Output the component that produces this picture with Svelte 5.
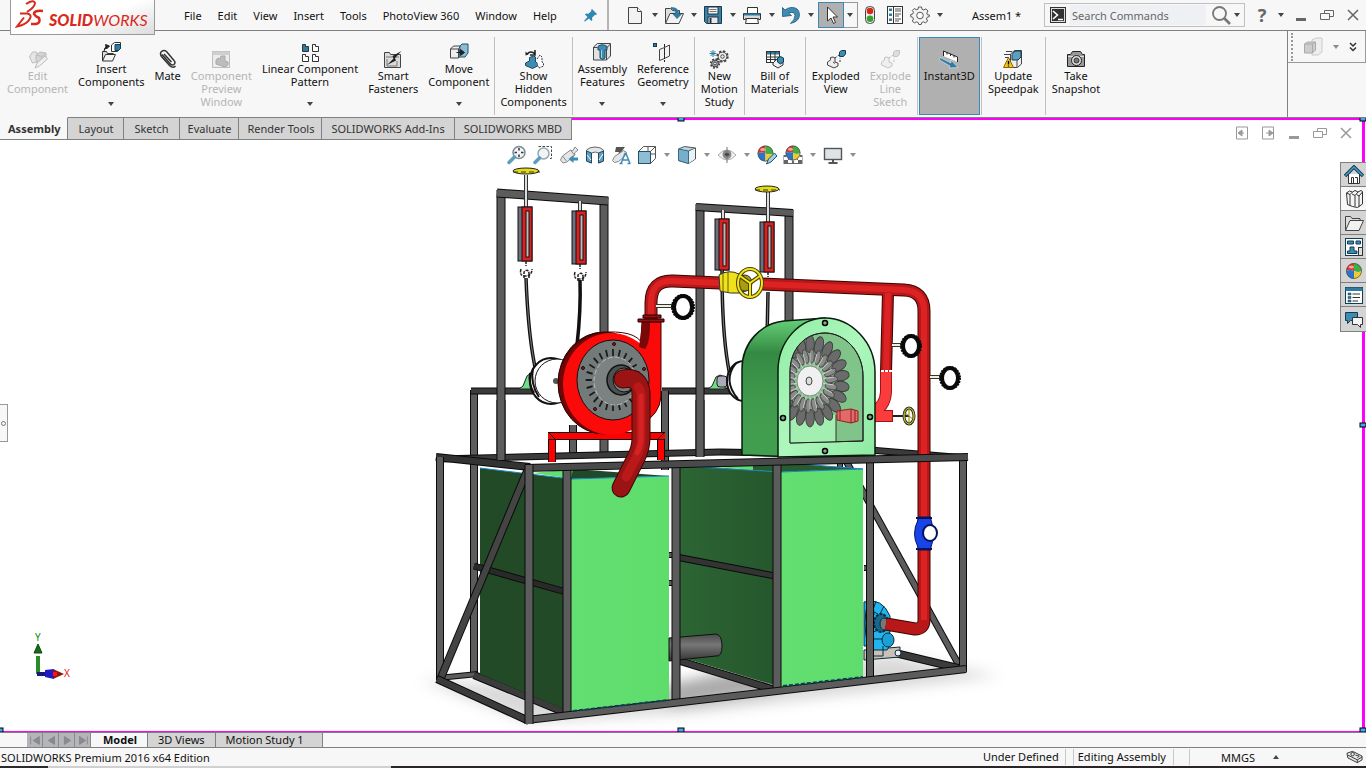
<script lang="ts">
	type Tool = {
		label: string;
		icon: string;
		menu?: boolean;
		disabled?: boolean;
		pressed?: boolean;
	};

	type Beam = [number, number, number, number, number, string?];

	const menus = ['File', 'Edit', 'View', 'Insert', 'Tools', 'PhotoView 360', 'Window', 'Help'];

	const quick = [
		{ label: 'New', icon: 'new', menu: true },
		{ label: 'Open', icon: 'open', menu: true },
		{ label: 'Save', icon: 'save', menu: true },
		{ label: 'Print', icon: 'print', menu: true },
		{ label: 'Undo', icon: 'undo', menu: true },
		{ label: 'Select', icon: 'cursor', menu: true, pressed: true },
		{ label: 'Rebuild', icon: 'traffic' },
		{ label: 'File Properties', icon: 'props' },
		{ label: 'Options', icon: 'gear', menu: true }
	];

	const ribbon: Tool[][] = [
		[
			{ label: 'Edit\nComponent', icon: 'edit', disabled: true },
			{ label: 'Insert\nComponents', icon: 'insert', menu: true },
			{ label: 'Mate', icon: 'mate' },
			{ label: 'Component\nPreview\nWindow', icon: 'preview', disabled: true },
			{ label: 'Linear Component\nPattern', icon: 'pattern', menu: true },
			{ label: 'Smart\nFasteners', icon: 'fasteners' },
			{ label: 'Move\nComponent', icon: 'move', menu: true }
		],
		[{ label: 'Show\nHidden\nComponents', icon: 'hidden' }],
		[
			{ label: 'Assembly\nFeatures', icon: 'features', menu: true },
			{ label: 'Reference\nGeometry', icon: 'reference', menu: true }
		],
		[{ label: 'New\nMotion\nStudy', icon: 'motion' }],
		[{ label: 'Bill of\nMaterials', icon: 'bom' }],
		[
			{ label: 'Exploded\nView', icon: 'explode' },
			{ label: 'Explode\nLine\nSketch', icon: 'explodeLine', disabled: true }
		],
		[{ label: 'Instant3D', icon: 'instant', pressed: true }],
		[{ label: 'Update\nSpeedpak', icon: 'speedpak' }],
		[{ label: 'Take\nSnapshot', icon: 'camera' }]
	];

	const tabs = ['Assembly', 'Layout', 'Sketch', 'Evaluate', 'Render Tools', 'SOLIDWORKS Add-Ins', 'SOLIDWORKS MBD'];
	const studyTabs = ['Model', '3D Views', 'Motion Study 1'];
	let activeTab = $state('Assembly');
	let activeStudy = $state('Model');
	let query = $state('');

	const headsUp = [
		{ label: 'Zoom to Fit', icon: 'zoomFit' },
		{ label: 'Zoom to Area', icon: 'zoomArea' },
		{ label: 'Previous View', icon: 'prevView' },
		{ label: 'Section View', icon: 'section' },
		{ label: 'Dynamic Annotation Views', icon: 'annot' },
		{ label: 'View Orientation', icon: 'orient', menu: true },
		{ label: 'Display Style', icon: 'style', menu: true },
		{ label: 'Hide/Show Items', icon: 'eye', menu: true },
		{ label: 'Edit Appearance', icon: 'appearance' },
		{ label: 'Apply Scene', icon: 'scene', menu: true },
		{ label: 'View Settings', icon: 'monitor', menu: true }
	];

	const pane = [
		{ label: 'Resources', icon: 'home' },
		{ label: 'Design Library', icon: 'books' },
		{ label: 'File Explorer', icon: 'folder' },
		{ label: 'View Palette', icon: 'palette' },
		{ label: 'Appearances', icon: 'ball' },
		{ label: 'Custom Properties', icon: 'custom' },
		{ label: 'Forum', icon: 'chat' }
	];

	const playback = ['M3 4v9M13 4l-7 4.5 7 4.5z', 'M12 4l-7 4.5 7 4.5z', 'M5 4l7 4.5-7 4.5z', 'M13 4v9M4 4l7 4.5-7 4.5z'];

	const ballArt = (cx: number, cy: number, r: number) =>
		`<circle cx="${cx}" cy="${cy}" r="${r}" fill="#fff"/>` +
		`<path d="M${cx} ${cy}V${cy - r}A${r} ${r} 0 0 0 ${cx - r} ${cy}Q${cx - r / 2} ${cy - 2} ${cx} ${cy}" fill="#d8392b"/>` +
		`<path d="M${cx} ${cy}V${cy - r}A${r} ${r} 0 0 1 ${cx + r} ${cy}Q${cx + r / 2} ${cy + 2} ${cx} ${cy}" fill="#3fae49"/>` +
		`<path d="M${cx} ${cy}Q${cx - r / 2} ${cy - 2} ${cx - r} ${cy}A${r} ${r} 0 0 0 ${cx} ${cy + r}z" fill="#2c74c9"/>` +
		`<path d="M${cx} ${cy}Q${cx + r / 2} ${cy + 2} ${cx + r} ${cy}A${r} ${r} 0 0 1 ${cx} ${cy + r}z" fill="#f1c933"/>` +
		`<circle cx="${cx}" cy="${cy}" r="${r - 0.5}" fill="none" stroke="#555" stroke-width=".8"/>` +
		`<ellipse cx="${cx - r / 3}" cy="${cy - r / 2}" rx="${r / 3}" ry="${r / 5}" fill="#fff" opacity=".55"/>`;

	const gearArt = (cx: number, cy: number, r: number, fill: string) =>
		`<circle cx="${cx}" cy="${cy}" r="${r}" fill="none" stroke="#444" stroke-width="2.4" stroke-dasharray="${r * 0.42} ${r * 0.365}"/>` +
		`<circle cx="${cx}" cy="${cy}" r="${r - 0.6}" fill="${fill}" stroke="#444"/>` +
		`<circle cx="${cx}" cy="${cy}" r="${r * 0.35}" fill="#f7f7f7" stroke="#444"/>`;

	// 20 x 20 artwork, keyed by command
	const icons: Record<string, string> = {
		new: '<path d="M3.500 2.500h9l4 4v12h-13z" fill="#f2f2f2" stroke="#444"/><path d="M12.500 2.500v4h4" fill="#fff" stroke="#444"/>',
		open: '<path d="M1.500 18V3.500h5l2 2h7V8" fill="#ddd" stroke="#444"/><path d="M1.500 18.500L6 8.500h13.500l-4.500 10z" fill="#f2f2f2" stroke="#444"/><path d="M7 2q8 0 8 7h3l-5 5-4.500-5h3q0-3.500-4.500-5z" fill="#2f7ca3"/>',
		save: '<path d="M1.500 1.500h17v17h-15l-2-2z" fill="#3a81a5" stroke="#123c52"/><rect x="5" y="2" width="10" height="7" fill="#f4f4f4" stroke="#234"/><path d="M6.500 4.500h7M6.500 6.500h7" stroke="#777"/><rect x="5" y="12" width="10" height="6.500" fill="#e8e8e8" stroke="#234"/><path d="M7.500 13v5" stroke="#234" stroke-width="2"/>',
		print: '<path d="M5.500 8V2.500h10V8" fill="#fff" stroke="#333"/><path d="M1.500 8.500h17v6h-17z" fill="#d9d9d9" stroke="#333"/><path d="M2 8.500h16v2H2zM3 13h14v2H3z" fill="#2f7ca3"/><path d="M4.500 13.500h11l1 5h-13z" fill="#fff" stroke="#333"/>',
		undo: '<path d="M1.500 2.500v9l9-1-3-2.500q6-2 6.500 2.500 0 4-4.500 8 9-2 9-9Q18 2 10 2.500q-4 .5-6 2.500z" fill="#3e8db5" stroke="#1f5571" stroke-width=".8"/>',
		cursor: '<path d="M6.500 2v14l3.500-3 2.500 5.500 2-1-2.500-5.500h4.500z" fill="#fff" stroke="#333"/>',
		traffic: '<rect x="5.500" y="1.500" width="9" height="17" rx="4" fill="#eee" stroke="#444"/><circle cx="10" cy="6" r="3.300" fill="#d62718"/><circle cx="10" cy="13.800" r="3.300" fill="#36a12e"/>',
		props: '<rect x="2.500" y="1.500" width="15" height="17" fill="#fff" stroke="#333"/><path d="M8.500 2v16" stroke="#333"/><path d="M4 3.500h3v2.500H4zM4 8.500h3V11H4zM4 13.500h3V16H4z" fill="#2f7ca3"/><path d="M10 4h6M10 6h6M10 9h6M10 11h4M10 14h6M10 16h4" stroke="#555"/>',
		gear: '<path d="M8.500 2h3l.6 2.300 1.700.7L15.900 3.800 18 6l-1.200 2 .6 1.700 2 .3v1.500l-2.200.8-.7 1.600L17.500 16l-2 2-2-1.200-1.700.7-.6 2H8.800l-.7-2-1.700-.7L4.300 18l-2-2 1.200-2-.8-1.700-2-.6V9.500l2-.5.8-1.700L2.300 5.500l2-2 2 1.200L8 4.200z" fill="#f3f3f3" stroke="#555"/><circle cx="10" cy="10.500" r="3.300" fill="#fff" stroke="#555"/>',
		edit: '<g stroke="#bdbdbd" fill="#e6e6e6"><path d="M1.500 8l3-5h4l1 3v7l-5 1z"/><path d="M8 6l4-3 6 1v7l-4 3-6-2z" fill="#d4d4d4"/><path d="M8 6l6 1.500L18 4M14 7.500V14" fill="none"/><path d="M7 19l2-5 8-7 2.500 3-8 7z" fill="#efefef"/></g>',
		insert: '<path d="M1.500 19V9.500h4l1 2h6" fill="#ddd" stroke="#333"/><path d="M1.500 19l3-6.500h10l-3 6.500z" fill="#f3f3f3" stroke="#333"/><path d="M3 9q0-4 4-5M4.500 2.500L8.500 4 5.500 7z" stroke="#222" fill="#222"/><path d="M10.500 3l3-2.500h6v6l-3 3h-6z" fill="#fff" stroke="#333"/><path d="M14 2.500h5.500v4l-2 2H14z" fill="#2f7ca3" stroke="#123c52"/>',
		mate: '<path d="M4 5.500l8 9q2 2.500 4 1 2-2 0-4L8.500 2.500Q6 .5 3.500 2.500q-2 2 0 5l8.500 9.500q3 2.500 5.500 0M6 5l7.500 8" fill="none" stroke="#333" stroke-width="1.500"/>',
		preview: '<rect x="1.500" y="2.500" width="17" height="16" fill="#ececec" stroke="#bdbdbd"/><path d="M1.500 2.500h17V6h-17z" fill="#cfcfcf"/><path d="M5 11l2-2 2 1 1-3h4v5l3 1v3l-3 2-9-3z" fill="#bdbdbd" stroke="#aaa"/>',
		pattern: '<g fill="#fff" stroke="#333"><path d="M2.500 2.500h3v2h3v5h-6z" fill="#2f7ca3"/><path d="M12.500 2.500h3v2h3v5h-6zM2.500 12.500h3v2h3v5h-6zM12.500 12.500h3v2h3v5h-6z"/></g>',
		fasteners: '<path d="M1.500 18.500v-15h5l1 2h10v13z" fill="#dcdcdc" stroke="#444"/><path d="M3 8h13M4 10v7h10v-5" fill="none" stroke="#777"/><path d="M18.500 2l-9 5 1 2.500L4 16l9-4.500-1-2.500z" fill="#222"/>',
		move: '<path d="M1.500 7l3-3h7v9l-2 3h-8z" fill="#eee" stroke="#444"/><path d="M1.500 7h8v9M9.500 7l2-3" fill="none" stroke="#444"/><path d="M11 4l2-2h6v9l-3 4h-6z" fill="#8dbdd5" stroke="#22536b"/><path d="M7.500 10.500h5M11.500 7.500l4 3-4 3z" fill="#222" stroke="#222"/>',
		hidden: '<path d="M3 5q4-4 8 0M11 1v5H6" fill="none" stroke="#222" stroke-width="1.600"/><path d="M1.500 6.500v-4l3 3z" fill="#222"/><path d="M1.500 14l4-2V8.500l4-1.500 2 1v5l2 1v3l-5 2.500-7-3z" fill="#3f8cb3" stroke="#1b4a61"/><path d="M13 10l3-4 2 2v5l1.500 1v3L15 19l-1-2" fill="#fff" stroke="#333" stroke-dasharray="2 1"/>',
		features: '<path d="M1.500 5l4-3.500h13V14l-4 4h-13z" fill="#e2e2e2" stroke="#444"/><path d="M1.500 5.500h4M14.500 18V6l4-4" fill="none" stroke="#444"/><path d="M6 4.500Q10 1 15 4.500V8h-2v8l-2.500 1.500L8 16V8H6z" fill="#3f8cb3" stroke="#1b4a61"/><path d="M9.500 8v8" stroke="#9fd0e6"/>',
		reference: '<rect x=".5" y="1.500" width="3" height="3" fill="#2f7ca3" stroke="#123c52"/><path d="M6.500 7.500l5-2v11l-5 2zM11.500 5.500L16.500 3v11l-5 2.500" fill="#f3f3f3" stroke="#444"/><path d="M11.500 2v18" stroke="#222" stroke-dasharray="3 1"/>',
		motion: '<path d="M4 1v7M.5 4.500h7M1.500 2l5 5M6.500 2l-5 5" stroke="#2f7ca3"/>' + gearArt(13.5, 7.5, 5, '#eee') + gearArt(6, 14.5, 4, '#aaa'),
		bom: '<rect x="1.500" y="2.500" width="13" height="11" fill="#fff" stroke="#333"/><path d="M2 3h12v2.500H2z" fill="#2f7ca3"/><path d="M1.500 8h13M1.500 10.500h13M5.500 3v10M10 3v10" stroke="#333"/><path d="M8 14l4-4 6 2v4l-5 3-5-3z" fill="#eee" stroke="#333"/><path d="M12.500 9l3-1.500 3 1.500v4l-3 2-3-2z" fill="#3f8cb3" stroke="#123c52"/>',
		explode: '<path d="M1.500 13l3-2V8.500L7 8l2 1v4l3 1v3l-4 2-6.500-3z" fill="#eee" stroke="#444"/><path d="M7 13l2 1.500" stroke="#444"/><path d="M9 9l4-3M14 13V9" stroke="#333" stroke-dasharray="2 1.500"/><path d="M13.500 3l2-1.500h4V5l-2 2.500h-4z" fill="#3f8cb3" stroke="#123c52"/>',
		explodeLine: '<path d="M1.500 13l3-2V8.500L7 8l2 1v4l3 1v3l-4 2-6.500-3z" fill="#eee" stroke="#c4c4c4"/><path d="M9 9l4-3M14 13V9" stroke="#bbb" stroke-dasharray="2 1.500"/><path d="M13.500 3l2-1.500h4V5l-2 2.500h-4z" fill="#ddd" stroke="#c4c4c4"/>',
		instant: '<path d="M4.500 2l14 6v5l-14-6z" fill="#fff"/><path d="M4.500 7V2l14 6v5M8 3.500v2M11.500 5v2M15 6.500v2" fill="none" stroke="#222"/><path d="M1 8.500l11 5.500v-3l7 7.500-9 .5 1-2L.500 11z" fill="#2f7ca3" stroke="#e6eef2" stroke-width=".6"/>',
		speedpak: '<path d="M3 2.500h6M1 5.500h6M2 8.500h4" stroke="#444"/><path d="M7.500 5l4-3.500h7V15l-4 3.500h-7z" fill="#eee" stroke="#444"/><path d="M9 5.500L12 2h6v6l-3 3H9z" fill="#5b9fc1" stroke="#123c52"/><path d="M14 11v7" stroke="#444"/><path d="M5.500 8.500l5 10H.500z" fill="#f6c61e" stroke="#8a6500"/><path d="M5.500 12v3.500M5.500 16.500v1" stroke="#000" stroke-width="1.400"/>',
		camera: '<path d="M1.500 5.500h3l2-3h8l2 3h2v12h-17z" fill="#999" stroke="#222"/><path d="M2 7.500h16" stroke="#ddd"/><circle cx="10.500" cy="11.500" r="5" fill="#ddd" stroke="#222"/><circle cx="10.500" cy="11.500" r="2.500" fill="#777" stroke="#333"/>',
		zoomFit: '<circle cx="12" cy="7.500" r="6" fill="#eef4f7" stroke="#7b8b93" stroke-width="1.500"/><path d="M12 3v2.500M12 9.500V12M7.500 7.500H10M14 7.500h2.500" stroke="#333" stroke-width="1.500"/><path d="M7.500 12L2 17.500" stroke="#5e9dbd" stroke-width="3.500" stroke-linecap="round"/>',
		zoomArea: '<path d="M5.500 1.500h13v12h-3" fill="none" stroke="#444" stroke-dasharray="2.500 1.500"/><circle cx="10.500" cy="8.500" r="5.500" fill="#eef4f7" stroke="#9aa8af" stroke-width="1.500"/><path d="M6.500 13L2 17.500" stroke="#5e9dbd" stroke-width="3.500" stroke-linecap="round"/>',
		prevView: '<path d="M1.500 15l2-4 8-6 2 1 2.500-4 3 3-3.500 3 .5 2-8 7-4 1z" fill="#e4e6e7" stroke="#888"/><path d="M3.500 11l4 5M11.500 5l4 5" stroke="#888"/><path d="M9.500 14l5-4v2.500H19v3h-4.500V18z" fill="#3f8cb3"/>',
		section: '<path d="M1.500 5q3-3 8.500-3t8.500 3v11l-5 2V8q-3-2-7 0v10l-5-2z" fill="#e2e6e8" stroke="#666"/><path d="M1.500 6l5 2v10l-5-2zM13.500 8l5-2v10l-5 2z" fill="#5e9dbd" stroke="#1b4a61"/><path d="M2 10l4 5M14 15l4-6" stroke="#fff"/>',
		annot: '<path d="M5 2h9l-3 4h4l-9 6 2-5H4z" fill="#555"/><path d="M1.500 15.500l2-4 9-6 3 2-2 4-6 5-4 1z" fill="#e4e6e7" stroke="#888"/><path d="M10 18.500l4-10h1l4 10M11.500 15h6M8.500 18.500h3M16.500 18.500h3" fill="none" stroke="#3f8cb3" stroke-width="1.500"/>',
		orient: '<path d="M1.500 6.500l5-5h12v12l-5 5h-12z" fill="#fff" stroke="#555"/><rect x="1.500" y="6.500" width="12" height="12" fill="#8fbdd4" stroke="#22536b"/><path d="M13.500 6.500l5-5M18.500 9H14M11 1.500v5" stroke="#555"/>',
		style: '<path d="M1.500 4l6-2.500 11 1.500v11l-7 4.500-10-3z" fill="#b8d5e3" stroke="#555"/><path d="M1.500 4l10 2v12.500l-10-3z" fill="#78aecb" stroke="#386b84"/><path d="M11.500 6l7-3" stroke="#555"/><path d="M12 6.500l6-3V14l-6 4z" fill="#e9f2f6"/>',
		eye: '<path d="M1 10q9-10 18 0-9 10-18 0z" fill="#f4f4f4" stroke="#aaa"/><circle cx="10" cy="9.500" r="4.500" fill="#888"/><circle cx="10" cy="9.500" r="1.800" fill="#222"/><path d="M10 2v16" stroke="#777"/>',
		appearance: ballArt(8.5, 8.5, 8) + '<path d="M9.500 19l2-5 6-6 2.500 3-6 6z" fill="#9fd0e6" stroke="#22536b"/>',
		scene: '<rect x=".5" y="10" width="19" height="9" fill="#666"/><path d="M1 12h4v3H1zM5 15h4v3H5zM15 12h4v3h-4zM11 15h4v3h-4z" fill="#fff"/>' + ballArt(10, 8, 7.5),
		monitor: '<rect x="1.500" y="3.500" width="17" height="11" fill="#dfe3e5" stroke="#555" stroke-width="1.400"/><path d="M10 15v3M5.500 18h9" stroke="#555" stroke-width="2"/>',
		home: '<path d="M4.500 9v9.500h11V9" fill="#fff" stroke="#333"/><path d="M7.500 18.500v-6h2v6M11 12.500h2.500v6" fill="none" stroke="#333"/><path d="M1 11l9-9 9 9" fill="none" stroke="#123c52" stroke-width="3.500"/><path d="M1.500 10.500L10 2l8.500 8.500" fill="none" stroke="#4c9cc4" stroke-width="1.500"/>',
		books: '<path d="M2.500 4l3-2 3 1 2.500-1.500L14 3l3-1.500 1.500 1V15l-5 3.500-5-1-5-2z" fill="#f5f5f5" stroke="#333"/><path d="M2.500 4L6 5.500v11M6 5.500L8.500 3M8 5l3 1.500v11M11 6.500L14 3M12.500 5.500L15 7v11M15 7l3.500-4" fill="none" stroke="#333"/>',
		folder: '<path d="M1.500 17.500v-14h5l1.500 2h8V8" fill="#ddd" stroke="#444"/><path d="M1.500 17.500L6 7.500h13.500l-4.500 10z" fill="#f2f2f2" stroke="#444"/>',
		palette: '<rect x="1.500" y="1.500" width="17" height="17" fill="#fff" stroke="#123c52"/><path d="M3.500 4h6v3h-6zM12 4h4.500v3H12zM6 10h4v4h3v2.500H3.500V14H6z" fill="#3f8cb3" stroke="#123c52"/><rect x="14.500" y="10.500" width="4" height="8" fill="#ddd" stroke="#333"/>',
		ball: ballArt(10, 10, 8),
		custom: '<rect x="1.500" y="2.500" width="17" height="16" fill="#fff" stroke="#123c52"/><path d="M1.500 2.500h17V6h-17z" fill="#2f7ca3"/><path d="M4 8h3v2H4zM4 11.500h3v2H4zM4 15h3v2H4z" fill="#2f7ca3" stroke="#123c52" stroke-width=".5"/><path d="M8.500 9H16M8.500 12.500H16M8.500 16H14" stroke="#333"/>',
		chat: '<path d="M1.500 3.500h12v8h-7l-3 3v-3h-2z" fill="#3f8cb3" stroke="#123c52"/><path d="M8.500 8.500h10v7h-2v3l-3-3h-5z" fill="#f4f4f4" stroke="#333"/>'
	};

	const steel = '#5c5c5c';

	const backBeams: Beam[] = [
		[474, 390, 474, 675, 8],
		[471, 391, 558, 391, 7, '#3b3b3b'],
		[662, 391, 745, 391, 7, '#3b3b3b'],
		[665, 391, 665, 470, 8],
		[573, 425, 573, 457, 8],
		[604, 197, 604, 458, 9],
		[501, 190, 501, 460, 9],
		[497, 193, 608, 201, 9],
		[700, 204, 700, 457, 9],
		[789, 210, 789, 340, 9],
		[696, 207, 793, 213, 8],
		[846, 461, 960, 667, 7],
		[840, 457, 840, 468, 6],
		[438, 678, 478, 674, 6],
		[669, 555, 673, 555, 6],
		[669, 583, 673, 583, 6],
		[864, 568, 869, 568, 6],
		[895, 653, 962, 669, 8, '#3b3b3b'],
		[474, 675, 566, 713, 8, '#3b3b3b'],
		[680, 661, 775, 690, 8, '#3b3b3b']
	];

	const deckBeams: Beam[] = [
		[438, 459, 720, 452, 7, '#3b3b3b'],
		[720, 452, 875, 455, 7, '#2e2e2e'],
		[870, 450, 966, 458, 7, '#3b3b3b'],
		[436, 457, 530, 467, 8, '#333']
	];

	// posts standing on the deck, over its rear edge
	const deckPosts: Beam[] = [
		[501, 400, 501, 460, 9],
		[700, 400, 700, 456, 9]
	];

	const frontBeams: Beam[] = [
		[474, 566, 566, 592, 7, '#292929'],
		[676, 557, 775, 576, 7, '#333'],
		[440, 457, 440, 680, 8],
		[567, 469, 567, 714, 9],
		[676, 465, 676, 702, 9],
		[777, 463, 777, 690, 9],
		[870, 460, 870, 679, 8],
		[963, 456, 963, 672, 8],
		[527, 471, 440, 680, 8, '#444'],
		[437, 679, 529, 721, 8, '#3b3b3b'],
		[527, 720, 966, 669, 8],
		[525, 468, 968, 457, 8, '#4a4a4a'],
		[529, 465, 529, 724, 9]
	];

	const scales = [
		{ x: 518, y: 207, h: 54, top: 175 },
		{ x: 572, y: 211, h: 53, top: 201 },
		{ x: 715, y: 219, h: 51, top: 210 },
		{ x: 760, y: 222, h: 50, top: 192 }
	];

	const gauges = [
		{ x: 683, y: 307, r: 10, from: 656 },
		{ x: 911, y: 346, r: 9, from: 892 },
		{ x: 950, y: 378, r: 9, from: 930 }
	];

	const fins = Array.from({ length: 24 }, (_, i) => i * 15);
	const blades = Array.from({ length: 22 }, (_, i) => (i * 360) / 22);

	const handles = [
		[681, 119],
		[1363, 119],
		[1363, 425],
		[1363, 730],
		[681, 730],
		[0, 730]
	];
</script>

{#snippet icon(name: string)}
	<svg class="icon" viewBox="0 0 20 20" fill="none" aria-hidden="true">{@html icons[name]}</svg>
{/snippet}

{#snippet caret()}
	<svg class="caret" viewBox="0 0 6 4" aria-hidden="true"><path d="M0 0h6L3 4z" fill="currentColor" /></svg>
{/snippet}

{#snippet winIcon(kind: string)}
	<svg class="win-icon" viewBox="0 0 14 14" fill="none" stroke="currentColor" aria-hidden="true">
		{#if kind === 'min'}
			<path d="M2 11.500h10" stroke-width="3" />
		{:else if kind === 'restore'}
			<path d="M4.500 5V2.500h9v6H10M.5 5.500h9v6h-9z" />
		{:else if kind === 'close'}
			<path d="M2 2l10 10M12 2L2 12" stroke-width="1.500" />
		{:else if kind === 'left'}
			<path d="M1.500 1h11v12h-11z" /><path d="M7 4L3 7l4 3zM7 7h2" fill="currentColor" />
		{:else}
			<path d="M1.500 1h11v12h-11z" /><path d="M8 4l4 3-4 3zM5 7h3" fill="currentColor" />
		{/if}
	</svg>
{/snippet}

{#snippet beams(list: Beam[])}
	{#each list as [x1, y1, x2, y2, w, tone]}
		<line {x1} {y1} {x2} {y2} stroke="#0a0a0a" stroke-width={w} />
		<line {x1} {y1} {x2} {y2} stroke={tone ?? steel} stroke-width={w - 2} />
	{/each}
{/snippet}

<div class="app">
	<header class="titlebar">
		<div class="logo">
			<svg viewBox="0 0 30 28" aria-hidden="true">
				<path d="M11 4q8-5 9-1 0 4-8 9" fill="none" stroke="#da291c" stroke-width="2" />
				<path d="M5 13.500h7q5 1 3 5-3 6-13 8l7-9" fill="none" stroke="#da291c" stroke-width="2" />
				<path d="M28 11q-9-1-9 3 1 2 5 4 2 5-3 6h-5" fill="none" stroke="#da291c" stroke-width="2.600" />
			</svg>
			<span><b>SOLID</b>WORKS</span>
		</div>
		<nav class="menus" aria-label="Main menu">
			{#each menus as menu}
				<button>{menu}</button>
			{/each}
			<button class="pin" aria-label="Pin menu">
				<svg viewBox="0 0 14 14" aria-hidden="true"><path d="M8 1l5 5-1 1-1-.3-3 3 .3 2.500-1 .8L5 10.500 1 13.500 0 13l3.500-4L1 6.500 2 5.500l2.500.3 3-3L7 2z" fill="#2f86b3" /></svg>
			</button>
		</nav>
		<div class="quick">
			{#each quick as q}
				<span class="split" class:pressed={q.pressed}>
					<button class="main" aria-label={q.label}>{@render icon(q.icon)}</button>
					{#if q.menu}<button class="more" aria-label="{q.label} menu">{@render caret()}</button>{/if}
				</span>
			{/each}
		</div>
		<span class="doc">Assem1 *</span>
		<div class="search">
			<svg class="prompt" viewBox="0 0 16 16" aria-hidden="true"><rect width="16" height="16" fill="#333" /><rect x="1.500" y="1.500" width="13" height="13" fill="none" stroke="#ddd" /><path d="M3 4l4.500 4L3 12M8 12.500h5" fill="none" stroke="#fff" stroke-width="1.600" /></svg>
			<input type="text" aria-label="Search Commands" placeholder="Search Commands" bind:value={query} />
			<button aria-label="Search">
				<svg viewBox="0 0 20 20" aria-hidden="true"><circle cx="8.500" cy="8.500" r="6.500" fill="none" stroke="#777" stroke-width="1.800" /><path d="M13 13l6 6" stroke="#777" stroke-width="2.600" /></svg>
			</button>
			<button class="small" aria-label="Search options">{@render caret()}</button>
		</div>
		<div class="window-buttons">
			<button class="help" aria-label="Help">?</button>
			<button class="help-more" aria-label="Help menu">{@render caret()}</button>
			<button aria-label="Minimize">{@render winIcon('min')}</button>
			<button aria-label="Restore">{@render winIcon('restore')}</button>
			<button aria-label="Close">{@render winIcon('close')}</button>
		</div>
	</header>

	<div class="ribbon-row">
		<div class="ribbon">
			{#each ribbon as group}
				<div class="group">
					{#each group as tool}
						<button class="tool" class:with-menu={tool.menu} class:pressed={tool.pressed} disabled={tool.disabled}>
							{@render icon(tool.icon)}
							<span>{tool.label}</span>
							{#if tool.menu}{@render caret()}{/if}
						</button>
					{/each}
				</div>
			{/each}
		</div>
		<div class="side">
			<div class="side-bar">
				<i></i>
				<button aria-label="View cube" disabled>
					<svg viewBox="0 0 20 20" aria-hidden="true"><path d="M9 3l4-2h6v14l-4 3H9z" fill="#eee" stroke="#ccc" /><path d="M1.500 7l3-2h8v8l-3 3h-8z" fill="#ccc" stroke="#aaa" /><path d="M1.500 7h8v9M9.500 7l3-2" stroke="#aaa" fill="none" /></svg>
				</button>
				<button class="dim" aria-label="View cube menu" disabled>{@render caret()}</button>
				<button aria-label="More commands">
					<svg class="chevrons" viewBox="0 0 8 10" aria-hidden="true"><path d="M1 1l3 3 3-3M1 5.500l3 3 3-3" fill="none" stroke="#333" stroke-width="1.500" /></svg>
				</button>
			</div>
		</div>
	</div>

	<main class="viewport">
		<svg class="scene" viewBox="0 118 1366 614" role="img" aria-label="Turbine test rig assembly">
			<defs>
				<linearGradient id="tank-front" x1="0" y1="0" x2="1" y2="0">
					<stop offset="0" stop-color="#62df70" />
					<stop offset="1" stop-color="#5edc6c" />
				</linearGradient>
				<linearGradient id="tank-side" x1="0" y1="0" x2="1" y2="0">
					<stop offset="0" stop-color="#2d6534" />
					<stop offset="1" stop-color="#25562c" />
				</linearGradient>
				<linearGradient id="case-side" x1="0" y1="0" x2="0" y2="1">
					<stop offset="0" stop-color="#67d37a" />
					<stop offset=".25" stop-color="#358a43" />
					<stop offset=".6" stop-color="#3f9a4d" />
					<stop offset="1" stop-color="#439f50" />
				</linearGradient>
				<linearGradient id="case-front" x1="0" y1="0" x2="1" y2="1">
					<stop offset="0" stop-color="#8feda4" />
					<stop offset=".5" stop-color="#adf7bd" />
					<stop offset="1" stop-color="#8eeaa2" />
				</linearGradient>
				<linearGradient id="drum" x1="0" y1="0" x2="0" y2="1">
					<stop offset="0" stop-color="#4a4a4a" />
					<stop offset=".4" stop-color="#777" />
					<stop offset="1" stop-color="#333" />
				</linearGradient>
				<clipPath id="window"><path d="M790 443V372C790 349 805 333 825 333S863 352 863 376V441Z" /></clipPath>
				<filter id="soft" x="-20%" y="-100%" width="140%" height="300%"><feGaussianBlur stdDeviation="7" /></filter>
			</defs>

			<path d="M420 680L530 722 700 712 1000 676 890 655 640 690Z" fill="#aaa" opacity=".45" filter="url(#soft)" />
			<path d="M669 685L775 660V690L669 706Z" fill="#777" opacity=".5" filter="url(#soft)" />
			{@render beams(backBeams)}

			<!-- load frames -->
			{#each scales as s}
				<path d="M{s.x + 8} {s.top}V{s.y}" stroke="#333" stroke-width="4" />
				<path d="M{s.x + 8} {s.top}V{s.y}" stroke="#ddd" stroke-width="2" />
				<rect x={s.x} y={s.y} width="14" height={s.h} fill="#6e7080" stroke="#111" />
				<rect x={s.x + 4} y={s.y} width="10" height={s.h} fill="#dc2020" stroke="#111" />
				<rect x={s.x + 8} y={s.y + 4} width="3" height={s.h - 8} fill="#bbb" stroke="#111" />
				<path d="M{s.x + 8} {s.y + s.h}v5m-5 3q-2 7 4 7q7 0 7-7m-8 9v-6q4-4 5 1v5" fill="none" stroke="#222" stroke-width="1.500" stroke-dasharray="3 1" />
			{/each}
			<g fill="#e6dc12" stroke="#222">
				<ellipse cx="526" cy="171" rx="13" ry="3" />
				<ellipse cx="767" cy="189" rx="12" ry="3" />
			</g>
			<path d="M513 172h27M755 190h25" stroke="#333" stroke-dasharray="5 3" />
			<g fill="none" stroke="#111" stroke-width="3.500">
				<path d="M526 278Q528 330 534 362T541 392" />
				<path d="M580 280Q581 310 577 345" />
				<path d="M722 270Q722 330 728 365T738 398" />
				<path d="M768 292L767 340" />
			</g>
			<path d="M526 278Q528 330 534 362T541 392M722 270Q722 330 728 365T738 398M768 292L767 340" fill="none" stroke="#999" stroke-width=".8" />

			<!-- brake wheels -->
			<path d="M519 389l4-3 4-10 4-3 4 2v14zM708 389l4-3 4-9 4-2 5 2v12z" fill="#6fdc8b" stroke="#222" />
			<ellipse cx="551" cy="381" rx="21" ry="23" fill="#fff" stroke="#111" stroke-width="2" />
			<ellipse cx="557" cy="381" rx="22" ry="22" fill="#fff" stroke="#111" />
			<path d="M530 373q-2 10 4 20M533 368q-3 16 6 29" fill="none" stroke="#111" stroke-width="2" />
			<circle cx="556" cy="381" r="3" fill="#555" />
			<rect x="717" y="376" width="10" height="11" rx="3" fill="#aab" stroke="#222" />
			<ellipse cx="744" cy="381" rx="17" ry="20" fill="#fff" stroke="#111" stroke-width="2" />
			<path d="M736 363q-14 17 2 36" fill="none" stroke="#111" stroke-width="2" />

			<!-- tanks -->
			<path d="M480 468L571 479V712L480 674Z" fill="#224a27" />
			<path d="M532 473L573 469V479Z" fill="#62df70" />
			<path d="M573 469L669 476 571 479Z" fill="#21482a" />
			<path d="M571 479L669 476V700L571 711Z" fill="url(#tank-front)" />
			<path d="M480 468L571 479 669 476" fill="none" stroke="#1785c4" />
			<path d="M680 465L781 472V687L680 657Z" fill="url(#tank-side)" />
			<path d="M703 466L753 464V470Z" fill="#62df70" />
			<path d="M753 464H800L863 469 781 472 753 470Z" fill="#285c30" />
			<path d="M781 472L863 469V678L781 687Z" fill="url(#tank-front)" />
			<path d="M680 466L781 472 863 469M800 464L863 469" fill="none" stroke="#1785c4" />
			<path d="M669 638L716 634Q722 635 722 646T716 656L669 661Z" fill="url(#drum)" stroke="#111" />

			<!-- feed pump -->
			<g stroke="#0a2c3a">
				<path d="M864 650l36-3v10l-36 3z" fill="#c9c0b8" />
				<path d="M864 602q18-5 26 14v16l-8 14h-18z" fill="#22b4ee" />
				<path d="M868 645l5-6h10l8 5-4 6h-17z" fill="#22b4ee" />
				<ellipse cx="888" cy="640" rx="6" ry="7" fill="#1aa0d6" />
				<path d="M868 602q-6 20 0 44M876 601q-4 8-2 14M884 606l-4 8M866 622h9M872 646v10h11v-10M866 634l10-3M870 610l8 4" fill="none" />
				<ellipse cx="881" cy="623" rx="7" ry="9" fill="#17698c" stroke-width="2" stroke-dasharray="3 1" />
				<ellipse cx="884" cy="624" rx="4" ry="6" fill="#777" />
				<circle cx="898" cy="653" r="3" fill="#eee" />
			</g>

			{@render beams(deckBeams)}
			{@render beams(deckPosts)}

			<!-- delivery pipes -->
			<g fill="none" stroke-linejoin="round">
				<g stroke="#3a0505">
					<path d="M651 320V303Q651 280 673 281L720 283M762 284L904 290Q924 291 924 311V620Q924 629 915 629L886 624" stroke-width="13" />
					<path d="M888 293L886 372" stroke-width="12" />
				</g>
				<g stroke="#b81818">
					<path d="M651 320V303Q651 280 673 281L720 283M762 284L904 290Q924 291 924 311V620Q924 629 915 629L886 624" stroke-width="11" />
					<path d="M888 289L886 372" stroke-width="10" />
				</g>
				<g stroke="#dc2222" stroke-width="6">
					<path d="M651 320V303Q651 280 673 281L720 283M762 284L904 290Q924 291 924 311V620" />
					<path d="M888 293L886 372" />
				</g>
				<path d="M886 371V392Q885 408 872 411M872 416H893" stroke="#a01414" stroke-width="12" />
				<path d="M886 372V392Q885 408 872 411M872 416H892" stroke="#fb3c3c" stroke-width="10" />
				<path d="M881 371h11" stroke="#fff" stroke-width="2" stroke-dasharray="3 1" />
			</g>

			<!-- check valve -->
			<path d="M918 517h13v3q5 14 0 27v3h-13v-3q-7-13 0-27z" fill="#1644e8" stroke="#06135c" />
			<path d="M916 518h16M916 549h16" stroke="#06135c" stroke-width="2" />
			<ellipse cx="930" cy="533" rx="7" ry="8" fill="#fff" stroke="#06135c" stroke-width="2" />

			<!-- gate valve -->
			<path d="M719 275q10-6 20-1l10 3v13l-10 3q-8 1-19-2z" fill="#efe21d" stroke="#333" />
			<path d="M723 273v19M728 272v21" stroke="#665e00" />
			<ellipse cx="745" cy="283" rx="7" ry="8" fill="#a89c12" stroke="#333" />
			<g fill="none" stroke="#4a4300">
				<ellipse cx="750" cy="283" rx="12" ry="14" stroke-width="4" />
				<path d="M750 283v14M750 283l-10-7M750 283l10-7" stroke-width="4" />
			</g>
			<g fill="none" stroke="#f2e51c" stroke-width="2">
				<ellipse cx="750" cy="283" rx="12" ry="14" />
				<path d="M750 283v14M750 283l-10-7M750 283l10-7" />
			</g>
			<path d="M893 416h16" stroke="#222" stroke-width="2" />
			<ellipse cx="909" cy="416" rx="5" ry="8" fill="none" stroke="#333" stroke-width="3" />
			<ellipse cx="909" cy="416" rx="5" ry="8" fill="none" stroke="#e6dc12" />
			<path d="M909 408v16M904 412l10 8" stroke="#8a8200" />

			{#each gauges as g}
				<path d="M{g.from} {g.y - 1}H{g.x - g.r}" stroke="#333" stroke-width="4" />
				<path d="M{g.from} {g.y - 1}H{g.x - g.r}" stroke="#f5efd8" stroke-width="2" />
				<ellipse cx={g.x} cy={g.y} rx={g.r - 1} ry={g.r + 1} fill="#fff" stroke="#0a0a0a" stroke-width="4" />
				<ellipse cx={g.x} cy={g.y} rx={g.r + 1} ry={g.r + 2} fill="none" stroke="#0a0a0a" stroke-width="2" stroke-dasharray="2 1" />
			{/each}

			{@render beams(frontBeams)}
			<path d="M573 711L669 700M783 686L863 677" stroke="#0b3d55" stroke-width="2" stroke-dasharray="4 2" />

			<!-- turbine casing -->
			<path d="M742 455V369C742 342 762 323 784 321L825 318 800 457Z" fill="url(#case-side)" stroke="#0a1c0d" stroke-width="1.500" />
			<path d="M778 457V371C778 342 799 318 825 318S875 342 875 372V455Z" fill="url(#case-front)" stroke="#0a1c0d" stroke-width="1.500" />
			<path d="M790 443V372C790 349 805 333 825 333S863 352 863 376V441Z" fill="#80c48a" stroke="#222" />
			<g clip-path="url(#window)">
				<path d="M790 415H836V443H790Z" fill="#a3efb2" />
				<path d="M836 415V443" stroke="#333" />
				{#each blades as angle}
					<g transform="translate(810 381) scale(.86 1) rotate({angle})">
						<ellipse cx="0" cy="-37" rx="5" ry="9" fill="#6b6b6b" stroke="#3b3b3b" />
						<ellipse cx="2" cy="-25" rx="3" ry="7" fill="#8a8a8a" stroke="#474747" />
						<path d="M0-15V-28" stroke="#ccc" />
					</g>
				{/each}
			</g>
			<ellipse cx="810" cy="381" rx="13" ry="15" fill="#f0f0f0" stroke="#888" />
			<ellipse cx="809" cy="381" rx="3" ry="4" fill="#ddd" stroke="#444" />
			<path d="M837 411L851 409 858 411V421L851 423 837 420Z" fill="#e26b69" stroke="#8d1f1f" />
			<path d="M840 411v9M851 409v14M855 410v12" stroke="#8d1f1f" />
			<path d="M790 443V372C790 349 805 333 825 333S863 352 863 376V441Z" fill="none" stroke="#222" />
			{#each [[825, 323], [783, 418], [870, 417], [825, 451]] as [cx, cy]}
				<circle {cx} {cy} r="2.500" fill="#8aa790" stroke="#000" stroke-width="1.500" />
			{/each}

			<!-- centrifugal pump -->
			{@render beams([
				[552, 436, 552, 462, 8, '#f00'],
				[661, 436, 661, 460, 8, '#f00'],
				[548, 436, 665, 436, 8, '#f00']
			])}
			<path d="M549 433l6 6M664 433l-6 6" stroke="#300" />
			<path d="M642 322H661V396Q660 415 640 425L632 352 641 343Z" fill="#f00d0d" stroke="#400" />
			<ellipse cx="604" cy="383" rx="46" ry="51" fill="#710606" stroke="#200" />
			<ellipse cx="611" cy="384" rx="48" ry="51" fill="#fb0a0a" />
			<path d="M562 364Q576 333 608 332T644 348" fill="none" stroke="#400" />
			<path d="M636 352L645 346V323H660V396Q659 410 650 416Z" fill="#fb0a0a" />
			<path d="M642 323H650Q650 343 645 349L639 347Z" fill="#7a0808" />
			<path d="M638 319h26v3h-26zM643 315h18v3h-18z" fill="#a00c0c" stroke="#200" />
			<ellipse cx="613" cy="380" rx="36" ry="40" fill="#737a7a" stroke="#111" />
			{#each fins as angle}
				<path d="M0-24V-31" transform="translate(613 380) scale(.88 1) rotate({angle})" stroke="#1a1a1a" stroke-width="2" />
			{/each}
			<ellipse cx="615" cy="381" rx="21" ry="24" fill="#7b8282" stroke="#ccc" stroke-width=".8" stroke-dasharray="5 2" />
			{#each [[614, 344], [583, 368], [644, 369], [595, 409]] as [cx, cy]}
				<circle {cx} {cy} r="1.500" fill="#a11" stroke="#111" />
			{/each}
			<ellipse cx="621" cy="380" rx="14" ry="15" fill="#4c5151" stroke="#111" stroke-width="1.500" />
			<ellipse cx="624" cy="380" rx="11" ry="12" fill="#777e7e" stroke="#111" />
			<g fill="none" stroke-linecap="round">
				<path d="M623 379Q641 376 641 395V438Q641 448 636 458L621 488" stroke="#3f0505" stroke-width="19" />
				<path d="M623 379Q641 376 641 395V438Q641 448 636 458L621 488" stroke="#9b1414" stroke-width="17" />
				<path d="M638 387Q641 390 641 397V438Q641 448 636 458L626 477" stroke="#bb1919" stroke-width="9" />
				<path d="M641 396V438Q641 446 637 453" stroke="#d62222" stroke-width="5" />
			</g>

			<!-- origin triad -->
			<path d="M38 656V674" stroke="#2b8b2b" stroke-width="4" />
			<path d="M38 644l4 9h-8z" fill="#176b17" stroke="#0d4f0d" />
			<path d="M37 674H47" stroke="#191980" stroke-width="4" />
			<path d="M45 670l9-1v10l-9-2z" fill="#1c1cc8" />
			<path d="M53 669l11 5-11 5z" fill="#8c1515" />
			<path d="M53 672h4v4h-4z" fill="#f11" />
			<text x="35" y="641" fill="#0a8a0a">Y</text>
			<text x="64" y="677" fill="#f01010">X</text>
		</svg>

		<div class="edge"></div>
		<svg class="handles" viewBox="0 118 1366 614" aria-hidden="true">
			{#each handles as [x, y]}
				<rect x={x - 3} y={y - 2} width="6" height="4" fill="#4aa3f0" stroke="#000" />
			{/each}
		</svg>

		<div class="tabs" role="tablist">
			{#each tabs as tab}
				<button role="tab" aria-selected={activeTab === tab} onclick={() => (activeTab = tab)}>{tab}</button>
			{/each}
		</div>

		<div class="heads-up">
			{#each headsUp as h}
				<button aria-label={h.label}>{@render icon(h.icon)}</button>
				{#if h.menu}<button class="more" aria-label="{h.label} menu">{@render caret()}</button>{/if}
			{/each}
		</div>

		<div class="doc-buttons">
			<button aria-label="Dock left">{@render winIcon('left')}</button>
			<button aria-label="Dock right">{@render winIcon('right')}</button>
			<button aria-label="Minimize document">{@render winIcon('min')}</button>
			<button aria-label="Restore document">{@render winIcon('restore')}</button>
			<button aria-label="Close document">{@render winIcon('close')}</button>
		</div>

		<div class="pane">
			{#each pane as p, i}
				<button class:light={i === 1} aria-label={p.label}>{@render icon(p.icon)}</button>
			{/each}
		</div>

		<button class="flap" aria-label="Show feature tree"><i></i></button>
	</main>

	<div class="study-row">
		<div class="playback">
			{#each playback as d, i}
				<button aria-label="Scroll tabs {i + 1}" disabled>
					<svg viewBox="0 0 16 16" aria-hidden="true"><path {d} fill="#8a8b8f" stroke="#85868a" /></svg>
				</button>
			{/each}
		</div>
		<div class="study-tabs" role="tablist">
			{#each studyTabs as tab}
				<button role="tab" aria-selected={activeStudy === tab} onclick={() => (activeStudy = tab)}>{tab}</button>
			{/each}
		</div>
	</div>

	<footer class="status">
		<span class="edition">SOLIDWORKS Premium 2016 x64 Edition</span>
		<span class="cell">Under Defined</span>
		<span class="cell gap"></span>
		<span class="cell editing">Editing Assembly</span>
		<span class="cell gap wide"></span>
		<button class="units">MMGS {@render caret()}</button>
		<button class="tag" aria-label="Tags">
			<svg viewBox="0 0 18 14" aria-hidden="true"><path d="M1 3l6-2 10 5v4l-5 3L2 8z" fill="#e8e8e8" stroke="#333" /><path d="M2 5l10 5 5-3M12 10v3" fill="none" stroke="#333" /><circle cx="7" cy="4" r="1.800" fill="none" stroke="#333" /><path d="M10 5l4 1-2 2" fill="none" stroke="#333" /></svg>
		</button>
	</footer>
	<div class="taskbar-edge"></div>
</div>

<style>
	:global(body) {
		margin: 0;
		background: #f7f7f7;
	}

	.app {
		display: flex;
		flex-direction: column;
		height: 100vh;
		overflow: hidden;
		background: #f7f7f7;
		color: #111;
		font: 11px/13px 'Noto Sans', 'Open Sans', sans-serif;
	}

	button {
		display: flex;
		align-items: center;
		justify-content: center;
		margin: 0;
		padding: 0;
		border: 0;
		background: none;
		color: inherit;
		font: inherit;
	}

	.icon {
		display: block;
		width: 20px;
		height: 20px;
		flex: none;
	}

	.caret {
		width: 6px;
		height: 4px;
		color: #444;
	}

	.win-icon {
		width: 14px;
		height: 14px;
	}

	.titlebar {
		position: relative;
		display: flex;
		align-items: stretch;
		height: 30px;
		flex: none;
		border-bottom: 1px solid #808080;
	}

	.logo {
		position: absolute;
		z-index: 2;
		top: 0;
		left: 10px;
		display: flex;
		align-items: center;
		box-sizing: border-box;
		width: 145px;
		height: 35px;
		padding: 0 4px;
		border: 1px solid #999;
		border-top: 0;
		background: linear-gradient(160deg, #fff 55%, #dcdcdc);
		color: #da291c;
		font: italic 16px/20px Lato, sans-serif;
	}

	.logo svg {
		width: 30px;
		height: 28px;
		margin-bottom: 6px;
		flex: none;
	}

	.logo span {
		padding-left: 4px;
		padding-top: 5px;
	}

	.logo b {
		font-weight: 900;
	}

	.menus {
		display: flex;
		padding-left: 176px;
		padding-right: 9px;
		border-right: 2px solid #b5b5b5;
	}

	.menus button {
		padding: 0 8px;
	}

	.menus .pin {
		padding-left: 19px;
		padding-right: 0;
	}

	.pin svg {
		width: 14px;
		height: 14px;
	}

	.quick {
		display: flex;
		align-items: center;
		padding-left: 14px;
	}

	.split {
		display: flex;
		height: 26px;
	}

	.split .main {
		width: 25px;
	}

	.split .more {
		width: 14px;
	}

	.split.pressed .main {
		box-sizing: border-box;
		width: 26px;
		border: 1px solid #3c88b4;
		background: #b0b0b0;
	}

	.split.pressed .more {
		box-sizing: border-box;
		border: 1px solid #999;
		border-left: 0;
	}

	.doc {
		align-self: center;
		margin-right: auto;
		padding-left: 25px;
	}

	.search {
		display: flex;
		align-items: center;
		align-self: center;
		box-sizing: border-box;
		width: 201px;
		height: 24px;
		padding-left: 5px;
		border: 1px solid #c0c0c0;
	}

	.search .prompt {
		width: 16px;
		height: 16px;
		margin-right: 4px;
		flex: none;
	}

	.search input {
		flex: 1;
		box-sizing: border-box;
		min-width: 0;
		height: 20px;
		padding: 0 2px;
		border: 0;
		background: #eff0f4;
		color: #222;
		font: inherit;
	}

	.search input::placeholder {
		color: #666;
		opacity: 1;
	}

	.search button {
		width: 26px;
		padding-left: 4px;
	}

	.search button svg:not(.caret) {
		width: 20px;
		height: 20px;
	}

	.search .small {
		width: 12px;
		padding: 0 2px 0 0;
	}

	.window-buttons {
		display: flex;
		align-items: center;
		padding-left: 5px;
		color: #666;
	}

	.window-buttons button {
		width: 26px;
		height: 26px;
	}

	.window-buttons .help {
		width: 24px;
		font-size: 18px;
		font-weight: 700;
	}

	.window-buttons .help-more {
		width: 14px;
	}

	.ribbon-row {
		display: flex;
		flex: none;
	}

	.ribbon {
		display: flex;
		flex: 1;
		height: 86px;
		padding-left: 2px;
		border-right: 1px solid #808080;
		border-bottom: 1px solid #808080;
	}

	.group {
		display: flex;
		margin: 6px 0 2px;
		padding: 0 1px;
		border-right: 1px solid #c0c0c0;
	}

	.group:nth-child(-n + 3) {
		padding: 0;
	}

	.group:last-child {
		border-right: 0;
	}

	.tool {
		flex-direction: column;
		justify-content: flex-start;
		padding: 12px 5px 0;
		text-align: center;
	}

	.tool span {
		white-space: pre;
	}

	.tool.with-menu {
		padding-top: 5px;
	}

	.tool .caret {
		margin-top: 14px;
	}

	.tool:disabled {
		color: #b5b5b5;
	}

	.tool.pressed {
		padding: 11px 4px 0;
		border: 1px solid #3c88b4;
		background: #b0b0b0;
	}

	.side {
		width: 78px;
		border-bottom: 1px solid #808080;
	}

	.side-bar {
		display: flex;
		align-items: center;
		gap: 10px;
		height: 31px;
		border: 1px solid #999;
		border-left: 0;
		border-top: 0;
	}

	.side-bar i {
		height: 28px;
		margin-left: 3px;
		border-left: 2px dotted #999;
	}

	.side-bar svg:not(.caret, .chevrons) {
		width: 20px;
		height: 20px;
	}

	.side-bar .dim {
		opacity: 0.6;
	}

	.side-bar .chevrons {
		width: 8px;
		height: 10px;
	}

	.viewport {
		position: relative;
		flex: 1;
		min-height: 0;
		background: #fff;
	}

	.scene,
	.handles {
		position: absolute;
		inset: 0;
		width: 100%;
		height: 100%;
	}

	.scene text {
		font: 10px 'Noto Sans', sans-serif;
	}

	.edge {
		position: absolute;
		inset: 0 1px 0 0;
		border: solid #f0f;
		border-width: 2px 3px 1px 0;
	}

	.tabs {
		position: absolute;
		top: -1px;
		left: 0;
		display: flex;
		background: #f7f7f7;
	}

	.tabs button {
		height: 23px;
		box-sizing: border-box;
		padding: 0 7px 0 8px;
		border: 1px solid #808080;
		border-left: 0;
		background: #d4d4d4;
		color: #333;
	}

	.tabs button:nth-child(2),
	.tabs button:nth-child(3) {
		padding: 0 10px;
	}

	.tabs button:nth-child(n + 6) {
		padding: 0 9px;
	}

	.tabs button[aria-selected='true'] {
		border-top-color: #f7f7f7;
		background: #f7f7f7;
		font-weight: 700;
	}

	.heads-up {
		position: absolute;
		top: 27px;
		left: 0;
		right: 3px;
		display: flex;
		justify-content: center;
		pointer-events: none;
	}

	.heads-up button {
		width: 26px;
		height: 20px;
		pointer-events: auto;
	}

	.heads-up .more {
		width: 14px;
		opacity: 0.6;
	}

	.doc-buttons {
		position: absolute;
		top: 8px;
		right: 7px;
		display: flex;
		color: #999;
	}

	.doc-buttons button {
		width: 26px;
	}

	.pane {
		position: absolute;
		top: 44px;
		right: 0;
		display: flex;
		flex-direction: column;
		border: 1px solid #808080;
		border-right: 0;
		background: #d4d4d4;
	}

	.pane button {
		width: 25px;
		height: 24px;
		box-sizing: border-box;
		border-bottom: 1px solid #808080;
	}

	.pane button:last-child {
		border-bottom: 0;
	}

	.pane .light {
		background: #f7f7f7;
	}

	.flap {
		position: absolute;
		top: 0;
		bottom: 4px;
		left: -1px;
		width: 9px;
		height: 38px;
		margin: auto 0;
		border: 1px solid #999;
		background: #f7f7f7;
	}

	.flap i {
		width: 3px;
		height: 3px;
		border: 1px solid #777;
		border-radius: 50%;
	}

	.study-row {
		display: flex;
		height: 14px;
		flex: none;
		padding-left: 27px;
		border-top: 1px solid #808080;
		border-bottom: 1px solid #808080;
	}

	.playback {
		display: flex;
		background: #b4b5b8;
	}

	.playback button {
		width: 16px;
		box-sizing: border-box;
		border-right: 1px solid #8b8b8b;
	}

	.playback svg {
		width: 14px;
		height: 14px;
	}

	.study-tabs {
		display: flex;
	}

	.study-tabs button {
		padding: 0 10px 2px;
		border-right: 1px solid #808080;
		background: #d4d4d4;
	}

	.study-tabs button[aria-selected='true'] {
		padding-left: 12px;
		background: #f7f7f7;
		font-weight: 700;
	}

	.study-tabs button:last-child {
		padding-right: 18px;
	}

	.status {
		display: flex;
		align-items: center;
		height: 18px;
		flex: none;
	}

	.edition {
		margin-right: auto;
		padding-left: 1px;
	}

	.cell {
		padding-right: 6px;
		border-right: 1px solid #c8c8c8;
		line-height: 16px;
	}

	.gap {
		width: 7px;
		height: 16px;
		padding: 0;
	}

	.gap.wide {
		width: 15px;
	}

	.editing {
		padding-left: 4px;
		padding-right: 7px;
	}

	.units {
		gap: 18px;
		padding-left: 31px;
	}

	.units .caret {
		transform: rotate(180deg);
	}

	.tag {
		padding-left: 67px;
		padding-right: 3px;
	}

	.tag svg {
		width: 17px;
		height: 14px;
	}

	.taskbar-edge {
		height: 2px;
		flex: none;
		background: linear-gradient(to right, #2b2b2b 48px, #d0d0d0 48px 391px, #2b2527 391px);
	}
</style>
